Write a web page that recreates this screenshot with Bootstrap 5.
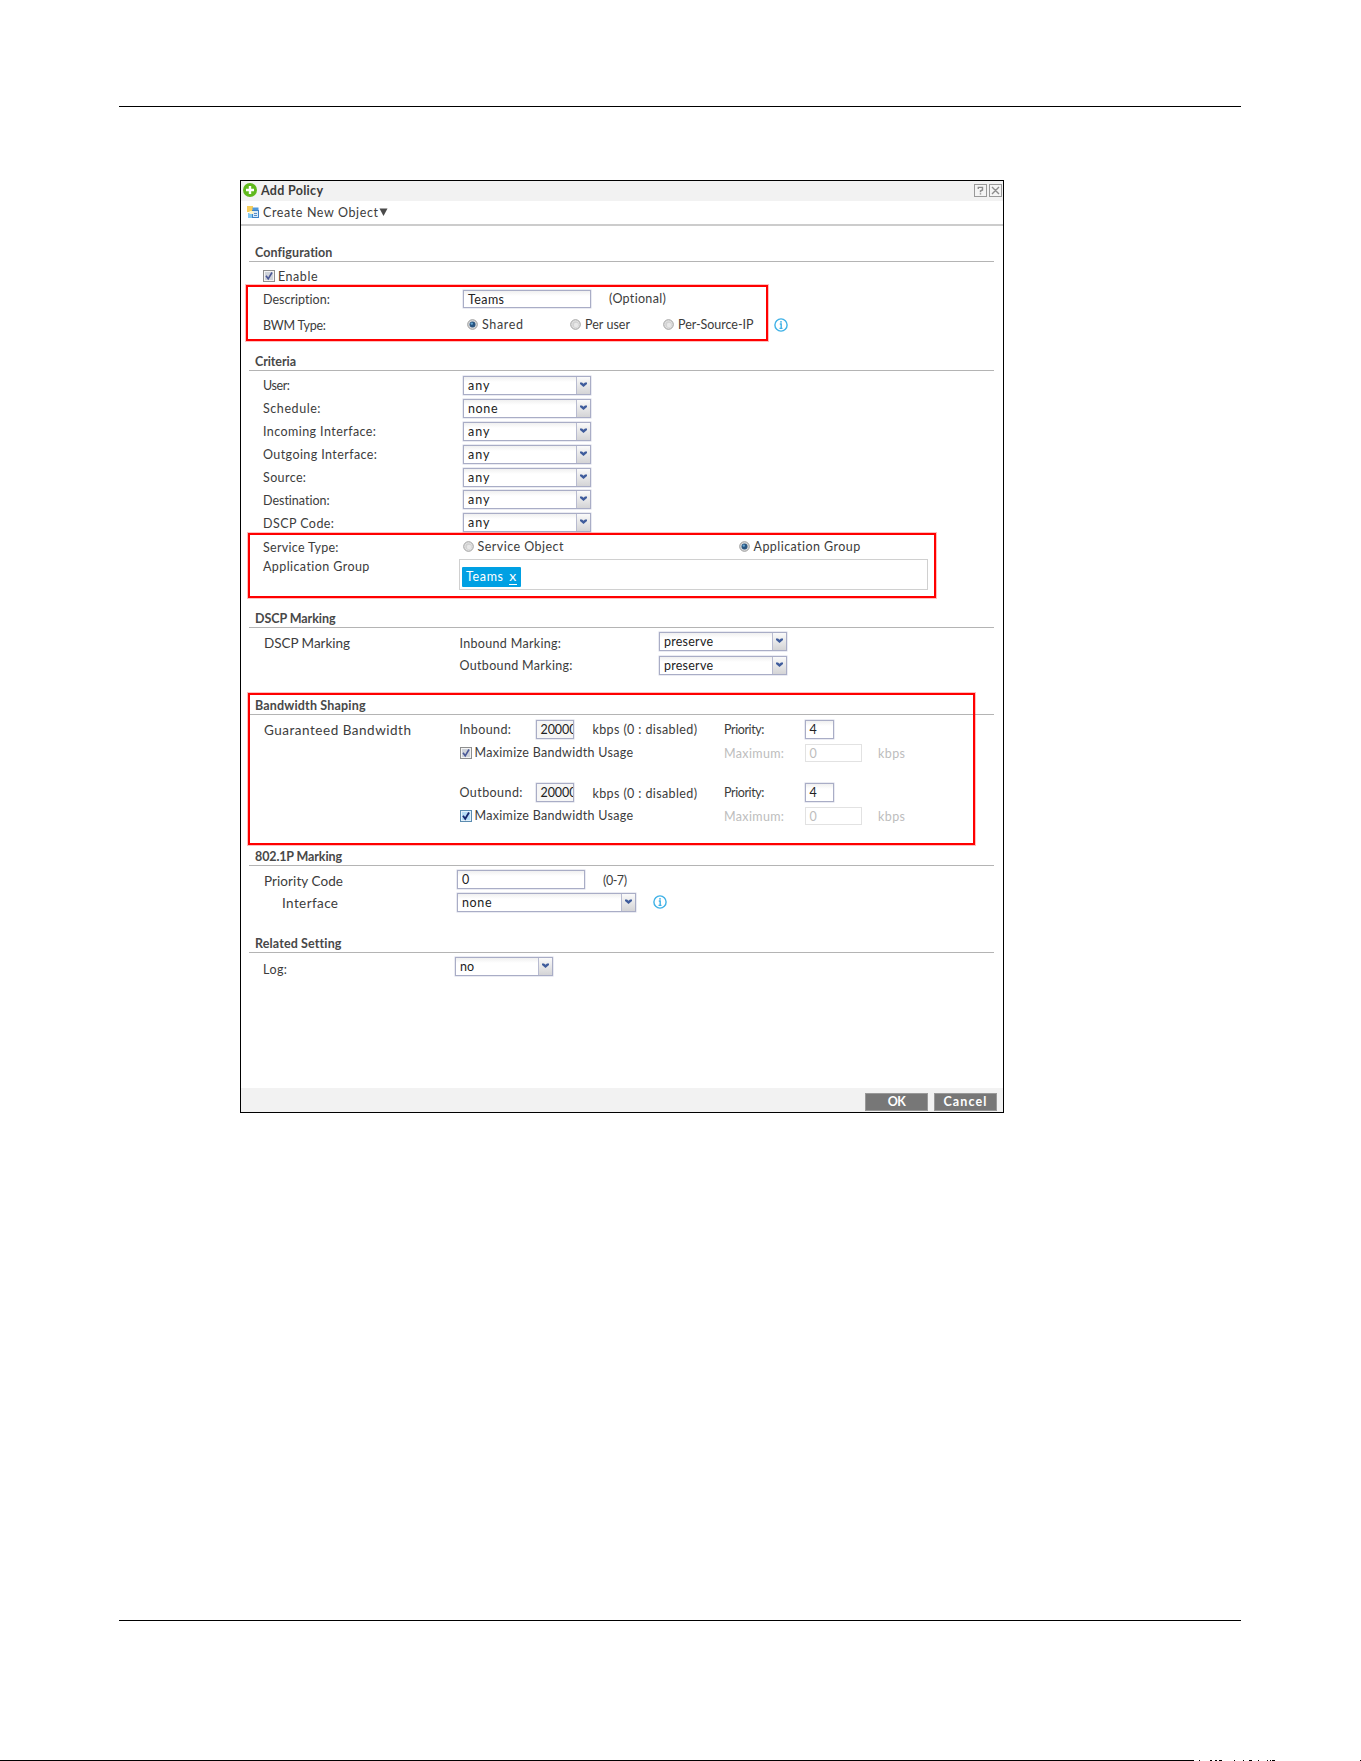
<!DOCTYPE html>
<html lang="en">
<head>
  <meta charset="UTF-8">
  <meta name="viewport" content="width=device-width, initial-scale=1">
  <title>Add Policy</title>
  <link rel="stylesheet" href="https://cdn.jsdelivr.net/npm/bootstrap@5.3.0/dist/css/bootstrap.min.css">
  <style>
    body { font-family: Lato, "Open Sans", sans-serif; font-size: 12.5px; line-height: 18px; color: #3c3c3c; background: #fff; }
    .sheet { height: 1761px; overflow: hidden; }
    .page-rule { height: 1px; margin: 0 120px 0 119px; background: #000; flex: none; }
    .rule-top { margin-top: 106px; }
    .rule-bottom { margin-top: 507px; }
    .dialog { width: 764px; height: 933px; margin: 73px 0 0 240px; border: 1px solid #000; flex: none; }
    .title-bar { height: 20px; padding: 0 1px 2px 2px; background: #f2f2f2; }
    .tool-bar { height: 25px; padding: 0 0 1px 6px; border-bottom: 2px solid #ccc; }
    .title-bar .t, .tool-bar .t { padding-top: 1px; }
    .foot-bar { height: 24px; padding: 5px 6px 1px; gap: 6px; background: #f2f2f2; }
    .foot-btn { width: 63px; height: 18px; background: #777; border: 1px solid #999; color: #fff; font-weight: bold; line-height: 14px; padding: 0; border-radius: 0; font-size: 12.5px; }
    .t { width: max-content; white-space: nowrap; flex: none; }
    .menu-text { margin-left: 4px; }

    .sec { height: 30px; margin: 0 9px 0 8px; padding-left: 6px; border-bottom: 1px solid #b4b4b4; font-weight: bold; line-height: 16px; color: #484848; flex: none; }
    .sec-36 { height: 36px; }
    .sec-38 { height: 38px; }
    .sec-41 { height: 41px; }

    .fields { display: grid; padding-left: 22px; align-items: center; flex: none; }
    .fields > .t { padding-top: 2px; }
    .f-config { grid-template: 28px 18px 33px / 200px auto; }
    .f-criteria { grid-template: repeat(7, 22.9px) 24.7px 31px / 200px auto; padding-top: 3px; }
    .f-dscp { grid-template: 23.5px 23.5px / 196.5px 199.5px auto; padding-top: 2px; }
    .f-band { grid-template: 29px 18px 21px 19px 28px / 196.5px 76px 57px 131.5px 80.5px 73.5px auto; }
    .f-prio { grid-template: 27px 19px / 193px auto; padding-left: 23px; }
    .f-log { grid-template: 27px / 192px auto; }
    .fields > .lower { padding-top: 4px; }
    .fields > .big { font-size: 13.5px; padding-left: 1px; }
    .f-prio > .big { padding-left: 0; }
    .f-prio > .sub { padding-left: 18px; }
    .fields > .group-label { align-self: start; margin-top: -3px; }
    .wide-3 { grid-column: span 3; }
    .wide-all { grid-column: 1 / -1; }

    .inp { height: 19px; border: 1px solid #a9adc6; background: linear-gradient(#f0f0f0, #fff 5px); padding-left: 4px; line-height: 18px; overflow: hidden; color: #222; box-shadow: 0 0 0 .5px #d5d7e4; }
    .inp-thin { height: 18px; line-height: 17px; }
    .w-128 { width: 128px; }
    .w-179 { width: 179px; }
    .w-98 { width: 98px; }
    .w-38 { width: 38px; background: #f6f6f6; }
    .w-29 { width: 29px; }
    .w-57 { width: 57px; }
    .arrow { width: 14px; flex: none; border-left: 1px solid #b8bbd0; background: linear-gradient(#fafafa, #d4d4d6); }
    .off { color: #bdbdbd; }
    .inp.off { border-color: #e2e2e2; background: #fff; box-shadow: none; color: #bdbdbd; }
    .opt { gap: 4px; }
    .opt-check { gap: 3px; }
    .opt-check .t { padding-top: 1px; }
    .opt-1 { width: 103px; margin-left: 4px; }
    .opt-2 { width: 93px; }
    .opt-3 { width: 107px; }
    .opt-svc { width: 276px; margin-left: -.5px; }
    .after { margin-left: 18px; }
    .info-gap { margin-left: 17px; }
    .tag-box { width: 469px; height: 31px; margin-left: -4px; padding: 7px 2px 2px; border: 1px solid #d0d0d0; }
    .tag { width: 59px; height: 20px; background: #00a0e3; color: #fff; border-radius: 1px; padding: 1px 4px 0; gap: 5px; }
    .tag-x { width: 9px; height: 16px; line-height: 14px; border-bottom: 1px solid #fff; text-align: center; font-size: 14px; margin-top: 1px; }

    .hl { position: absolute; border: 2px solid #f00; outline: .5px solid rgba(255, 0, 0, .25); pointer-events: none; }
    .hl-desc { left: 5px; top: 104px; width: 522px; height: 56px; }
    .hl-service { left: 7px; top: 352px; width: 688px; height: 65px; }
    .hl-band { left: 7px; top: 512px; width: 727px; height: 152px; }
  </style>
</head>
<body>
<svg class="d-none">
  <symbol id="radio" viewBox="0 0 11 11"><circle cx="5.5" cy="5.5" r="4.8" fill="#e4e4e4" stroke="#a0a0a0"/><circle cx="5.5" cy="5.5" r="3.2" fill="#d2d2d2"/><circle cx="6" cy="6" r="2.2" fill="#e8e8e8"/></symbol>
  <symbol id="radio-on" viewBox="0 0 11 11"><circle cx="5.5" cy="5.5" r="4.8" fill="#dcdcdc" stroke="#999"/><circle cx="5.5" cy="5.5" r="3" fill="#2a5580"/><circle cx="4.8" cy="4.6" r="1.2" fill="#66a8d4"/></symbol>
  <symbol id="check" viewBox="0 0 12 12"><rect x=".5" y=".5" width="11" height="11" fill="#f4f4f4" stroke="#8e8e8e"/><rect x="2" y="2" width="8" height="8" fill="#cfd3da"/><path d="M3 5.8l2.2 3L9 2.5" fill="none" stroke="#4a5896" stroke-width="1.6"/></symbol>
  <symbol id="check-blue" viewBox="0 0 12 12"><rect x=".5" y=".5" width="11" height="11" fill="#e3f1fb" stroke="#5c8cb0"/><rect x="2" y="2" width="8" height="8" fill="#b5dcf5"/><path d="M3 5.8l2.2 3L9 2.5" fill="none" stroke="#14286e" stroke-width="1.8"/></symbol>
  <symbol id="down" viewBox="0 0 13 17"><path d="M3 5.5h2l1.5 1.2L8 5.5h2v1.4L6.5 10 3 6.9z" fill="#3f5c9c"/></symbol>
  <symbol id="info" viewBox="0 0 14 14"><circle cx="7" cy="7" r="6.1" fill="#fff" stroke="#3fb1e6" stroke-width="1.4"/><path d="M7 3v1.7M5.8 6H7.2v4M5.5 10.4h3" fill="none" stroke="#3fb1e6" stroke-width="1.4"/></symbol>
</svg>

<div class="sheet d-flex flex-column">
  <div class="page-rule rule-top"></div>

  <div class="dialog d-flex flex-column position-relative">
    <div class="title-bar d-flex align-items-center">
      <svg width="14" height="14" viewBox="0 0 14 14"><circle cx="7" cy="7" r="7" fill="#5fb91c"/><path d="M7 3v8M3 7h8" stroke="#fff" stroke-width="2.4"/></svg>
      <span class="t fw-bold ms-1" data-w="62">Add Policy</span>
      <svg class="ms-auto" width="28" height="13" viewBox="0 0 28 13"><g fill="#f4f4f4" stroke="#999"><rect x=".5" y=".5" width="12" height="12"/><rect x="15.5" y=".5" width="12" height="12"/></g><path d="M4.3 5V3.4h4.2V6L6.5 7v1.3M6.5 9.2v1.4M18 3l7 7M25 3l-7 7" fill="none" stroke="#8c8c8c" stroke-width="1.4"/></svg>
    </div>
    <div class="tool-bar d-flex align-items-center">
      <svg width="12" height="13" viewBox="0 0 12 13"><rect width="6" height="6" fill="#f8cf5c"/><rect x="1" y="7" width="5" height="5" fill="#82c7f2"/><rect x="5.5" y="1.5" width="6" height="5" fill="#4f98dc"/><rect x="5.5" y="4.5" width="6" height="7" fill="#d8eafa" stroke="#3f83c6"/><rect x="2.5" y="5" width="4" height="3" fill="#fff6cc"/><path d="M7 7.5h3M7 9.5h3" stroke="#5b8fc4"/></svg>
      <span class="t menu-text" data-w="115">Create New Object</span>
      <svg width="9" height="8" viewBox="0 0 9 8"><path d="M.5 .5h8L4.500 8z" fill="#4a4a4a"/></svg>
    </div>

    <div class="sec sec-36 d-flex align-items-end"><span class="t" data-w="77.5">Configuration</span></div>
    <div class="fields f-config">
      <div class="d-flex align-items-center opt-check wide-all"><svg width="12" height="12"><use href="#check"/></svg><span class="t" data-w="39.5">Enable</span></div>
      <span class="t" data-w="67">Description:</span>
      <div class="d-flex align-items-center">
        <div class="inp inp-thin w-128"><span class="t" data-w="36">Teams</span></div>
        <span class="t after" data-w="57">(Optional)</span>
      </div>
      <span class="t" data-w="63">BWM Type:</span>
      <div class="d-flex align-items-center">
        <div class="d-flex align-items-center opt opt-1"><svg width="11" height="11"><use href="#radio-on"/></svg><span class="t" data-w="41">Shared</span></div>
        <div class="d-flex align-items-center opt opt-2"><svg width="11" height="11"><use href="#radio"/></svg><span class="t" data-w="45">Per user</span></div>
        <div class="d-flex align-items-center opt opt-3"><svg width="11" height="11"><use href="#radio"/></svg><span class="t" data-w="75.5">Per-Source-IP</span></div>
        <svg class="ms-1" width="14" height="14"><use href="#info"/></svg>
      </div>
    </div>

    <div class="sec d-flex align-items-end"><span class="t" data-w="41">Criteria</span></div>
    <div class="fields f-criteria">
      <span class="t" data-w="27">User:</span>
      <div class="inp w-128 d-flex"><span class="t me-auto" data-w="21.5">any</span><svg class="arrow"><use href="#down" width="13" height="17"/></svg></div>
      <span class="t" data-w="57.5">Schedule:</span>
      <div class="inp w-128 d-flex"><span class="t me-auto" data-w="29.5">none</span><svg class="arrow"><use href="#down" width="13" height="17"/></svg></div>
      <span class="t" data-w="113">Incoming Interface:</span>
      <div class="inp w-128 d-flex"><span class="t me-auto" data-w="21.5">any</span><svg class="arrow"><use href="#down" width="13" height="17"/></svg></div>
      <span class="t" data-w="114">Outgoing Interface:</span>
      <div class="inp w-128 d-flex"><span class="t me-auto" data-w="21.5">any</span><svg class="arrow"><use href="#down" width="13" height="17"/></svg></div>
      <span class="t" data-w="43">Source:</span>
      <div class="inp w-128 d-flex"><span class="t me-auto" data-w="21.5">any</span><svg class="arrow"><use href="#down" width="13" height="17"/></svg></div>
      <span class="t" data-w="67">Destination:</span>
      <div class="inp w-128 d-flex"><span class="t me-auto" data-w="21.5">any</span><svg class="arrow"><use href="#down" width="13" height="17"/></svg></div>
      <span class="t" data-w="71">DSCP Code:</span>
      <div class="inp w-128 d-flex"><span class="t me-auto" data-w="21.5">any</span><svg class="arrow"><use href="#down" width="13" height="17"/></svg></div>
      <span class="t" data-w="75.5">Service Type:</span>
      <div class="d-flex align-items-center">
        <div class="d-flex align-items-center opt opt-svc"><svg width="11" height="11"><use href="#radio"/></svg><span class="t" data-w="86">Service Object</span></div>
        <div class="d-flex align-items-center opt"><svg width="11" height="11"><use href="#radio-on"/></svg><span class="t" data-w="107">Application Group</span></div>
      </div>
      <span class="t group-label" data-w="106.5">Application Group</span>
      <div class="tag-box"><div class="tag d-flex"><span class="t" data-w="37">Teams</span><span class="tag-x">x</span></div></div>
    </div>

    <div class="sec sec-38 d-flex align-items-end"><span class="t" data-w="80.5">DSCP Marking</span></div>
    <div class="fields f-dscp">
      <span class="t big" data-w="87">DSCP Marking</span>
      <span class="t lower" data-w="101.5">Inbound Marking:</span>
      <div class="inp w-128 d-flex"><span class="t me-auto" data-w="49">preserve</span><svg class="arrow"><use href="#down" width="13" height="17"/></svg></div>
      <span></span>
      <span class="t" data-w="113">Outbound Marking:</span>
      <div class="inp w-128 d-flex"><span class="t me-auto" data-w="49">preserve</span><svg class="arrow"><use href="#down" width="13" height="17"/></svg></div>
    </div>

    <div class="sec sec-38 d-flex align-items-end"><span class="t" data-w="110.5">Bandwidth Shaping</span></div>
    <div class="fields f-band">
      <span class="t big" data-w="148">Guaranteed Bandwidth</span>
      <span class="t" data-w="51.5">Inbound:</span>
      <div class="inp w-38"><span class="t" data-w="36">20000</span></div>
      <span class="t" data-w="104.5">kbps (0 : disabled)</span>
      <span class="t" data-w="40.5">Priority:</span>
      <div class="inp w-29">4</div>
      <span></span>

      <span></span>
      <div class="d-flex align-items-center opt-check wide-3"><svg width="12" height="12"><use href="#check"/></svg><span class="t" data-w="158.5">Maximize Bandwidth Usage</span></div>
      <span class="t off" data-w="60">Maximum:</span>
      <div class="inp inp-thin w-57 off">0</div>
      <span class="t off" data-w="27">kbps</span>

      <span class="wide-all"></span>

      <span></span>
      <span class="t" data-w="63">Outbound:</span>
      <div class="inp w-38"><span class="t" data-w="36">20000</span></div>
      <span class="t lower" data-w="104.5">kbps (0 : disabled)</span>
      <span class="t" data-w="40.5">Priority:</span>
      <div class="inp w-29">4</div>
      <span></span>

      <span></span>
      <div class="d-flex align-items-center opt-check wide-3"><svg width="12" height="12"><use href="#check-blue"/></svg><span class="t" data-w="158.5">Maximize Bandwidth Usage</span></div>
      <span class="t off" data-w="60">Maximum:</span>
      <div class="inp inp-thin w-57 off">0</div>
      <span class="t off" data-w="27">kbps</span>
    </div>

    <div class="sec sec-36 d-flex align-items-end"><span class="t" data-w="87">802.1P Marking</span></div>
    <div class="fields f-prio">
      <span class="t big lower" data-w="79">Priority Code</span>
      <div class="d-flex align-items-center"><div class="inp w-128"><span class="t">0</span></div><span class="t after pt-1" data-w="24">(0-7)</span></div>
      <span class="t big sub" data-w="74">Interface</span>
      <div class="d-flex align-items-center">
        <div class="inp w-179 d-flex"><span class="t me-auto" data-w="29.5">none</span><svg class="arrow"><use href="#down" width="13" height="17"/></svg></div>
        <svg class="info-gap" width="14" height="14"><use href="#info"/></svg>
      </div>
    </div>

    <div class="sec sec-41 d-flex align-items-end"><span class="t" data-w="86">Related Setting</span></div>
    <div class="fields f-log">
      <span class="t lower pt-2" data-w="24">Log:</span>
      <div class="inp w-98 d-flex"><span class="t me-auto" data-w="14">no</span><svg class="arrow"><use href="#down" width="13" height="17"/></svg></div>
    </div>

    <div class="foot-bar d-flex justify-content-end mt-auto">
      <button class="btn foot-btn"><span data-w="18">OK</span></button>
      <button class="btn foot-btn"><span data-w="43">Cancel</span></button>
    </div>

    <!-- callouts drawn over the form -->
    <div class="hl hl-desc"></div>
    <div class="hl hl-service"></div>
    <div class="hl hl-band"></div>
  </div>

  <div class="page-rule rule-bottom"></div>

  <!-- bottom page edge, broken up towards the right -->
  <svg class="mt-auto flex-shrink-0" width="1361" height="1" viewBox="0 0 1361 1" shape-rendering="crispEdges">
    <path d="M0 .5h1194M1199 .5h1M1210 .5h2M1215 .5h2M1219 .5h3M1234 .5h1M1243 .5h1M1249 .5h3M1258 .5h1M1267 .5h1M1270 .5h1M1272 .5h3M1360 .5h1" stroke="#000"/>
  </svg>
</div>

<script>
  // track each label out to its data-w width
  document.querySelectorAll('[data-w]').forEach(el => {
    const extra = el.dataset.w - el.getBoundingClientRect().width;
    el.style.letterSpacing = extra / (el.textContent.length - 1) + 'px';
  });
</script>
<script src="https://cdn.jsdelivr.net/npm/bootstrap@5.3.0/dist/js/bootstrap.bundle.min.js"></script>
</body>
</html>
